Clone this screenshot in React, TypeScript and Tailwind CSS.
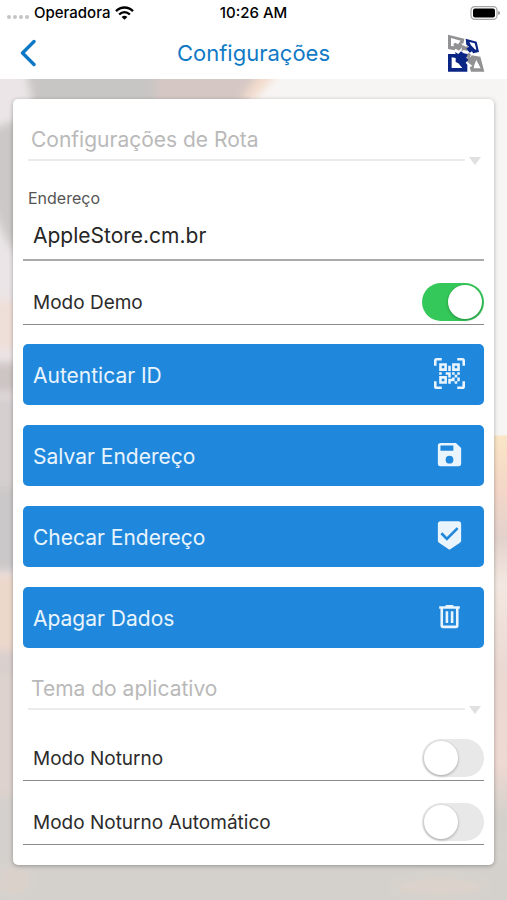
import { useState } from "react";

const ICONS = {
  qr: "M4,4H10V10H4V4M20,4V10H14V4H20M14,15H16V13H14V11H16V13H18V11H20V13H18V15H20V18H18V20H16V18H13V20H11V16H14V15M16,15V18H18V15H16M4,20V14H10V20H4M6,6V8H8V6H6M16,6V8H18V6H16M6,16V18H8V16H6M4,11H6V13H4V11M9,11H13V15H11V13H9V11M11,6H13V10H11V6M2,2V6H0V2A2,2 0 0,1 2,0H6V2H2M22,0A2,2 0 0,1 24,2V6H22V2H18V0H22M2,18V22H6V24H2A2,2 0 0,1 0,22V18H2M22,22V18H24V22A2,2 0 0,1 22,24H18V22H22Z",
  save: "M15,9H5V5H15M12,19A3,3 0 0,1 9,16A3,3 0 0,1 12,13A3,3 0 0,1 15,16A3,3 0 0,1 12,19M17,3H5C3.89,3 3,3.9 3,5V19A2,2 0 0,0 5,21H19A2,2 0 0,0 21,19V7L17,3Z",
  check: "M10,16L5,11L6.41,9.58L10,13.17L17.59,5.58L19,7M19,1H5C3.89,1 3,1.89 3,3V15.93C3,16.62 3.35,17.23 3.88,17.59L12,23L20.11,17.59C20.64,17.23 21,16.62 21,15.93V3C21,1.89 20.1,1 19,1Z",
  trash: "M9,3V4H4V6H5V19A2,2 0 0,0 7,21H17A2,2 0 0,0 19,19V6H20V4H15V3H9M7,6H17V19H7V6M9,8V17H11V8H9M13,8V17H15V8H13Z",
};

function Backdrop() {
  return (
    <svg
      className="absolute inset-0 -z-10 h-full w-full"
      viewBox="0 0 507 900"
      preserveAspectRatio="none"
      aria-hidden="true"
    >
      <defs>
        <filter id="soft" x="-20%" y="-20%" width="140%" height="140%">
          <feGaussianBlur stdDeviation="4" />
        </filter>
        <linearGradient id="right" x1="0" y1="0" x2="0" y2="1">
          <stop offset="0" stopColor="#fae6c6" />
          <stop offset="0.12" stopColor="#f3d6c8" />
          <stop offset="0.22" stopColor="#e3d2cc" />
          <stop offset="0.32" stopColor="#f3e8e1" />
          <stop offset="0.5" stopColor="#ead9d2" />
          <stop offset="0.7" stopColor="#efdad2" />
          <stop offset="0.82" stopColor="#d3d0cb" />
          <stop offset="1" stopColor="#d8d3ce" />
        </linearGradient>
      </defs>
      <rect width="507" height="900" fill="#ebe5e7" />
      <rect x="250" width="257" height="436" fill="#f7f5f4" />
      <rect x="250" y="435" width="257" height="465" fill="url(#right)" />
      <g filter="url(#soft)">
        <path d="M24 60H160V140H40Z" fill="#c8c6c4" />
        <path d="M156 60H282Q262 90 240 110H156Z" fill="#d5c8c4" />
        <path d="M262 70H280L254 100H240Z" fill="#f3dccd" />
        <path d="M-10 130L30 114V262Q2 250 -10 190Z" fill="#cbc8c7" />
        <rect x="-10" y="300" width="40" height="50" fill="#efdfd9" />
        <rect x="-10" y="362" width="40" height="30" fill="#cdc5c4" />
        <rect x="-10" y="396" width="40" height="90" fill="#d6cfd0" />
        <rect x="-10" y="486" width="40" height="84" fill="#cac8c8" />
        <rect x="-10" y="574" width="40" height="76" fill="#ecd7cb" />
        <rect x="-10" y="650" width="40" height="26" fill="#d9cfcd" />
        <rect x="-10" y="676" width="40" height="124" fill="#ddd2cd" />
        <rect x="-10" y="796" width="40" height="64" fill="#d4d0cd" />
        <rect x="-10" y="858" width="540" height="60" fill="#d4d1cd" />
        <ellipse cx="14" cy="880" rx="16" ry="14" fill="#dbd1cb" />
        <ellipse cx="440" cy="886" rx="46" ry="9" fill="#dbd2cb" />
      </g>
    </svg>
  );
}

function Logo() {
  return (
    <svg className="-ml-1 h-[46px] w-12" viewBox="0 0 144 138" role="img" aria-label="Logo">
      <g fill="#929294" fillRule="evenodd">
        <path d="M15 14L64 26L61 41L55 40L60 48L48 62L38 56L34 61L15 57ZM24 24V48L33 49L31 42L37 38L45 43L53 32Z" />
        <path d="M76 80L82 82L86 76L112 80L124 125H84L80 112L88 108L74 96L68 88ZM100 90L94 104L92 115H113Z" />
        <path d="M56 50L62 46L68 50L74 48L78 56L72 62L62 60L56 64Z" />
        <path d="M70 74L78 68L84 74L80 82L70 82Z" />
      </g>
      <g fill="#0b2585" fillRule="evenodd">
        <path d="M68 26L101 35L108 66L90 70L87 64L80 68L70 56L78 50L70 44ZM79 36L84 46L97 59L100 58L95 40Z" />
        <path d="M15 72H38L36 66L46 72L54 64L62 70L74 72L70 84L76 90L68 98L73 104V125H15ZM26 82V114H58L46 100L38 96V84Z" />
      </g>
    </svg>
  );
}

function StatusBar() {
  return (
    <div className="grid h-[26px] grid-cols-3 items-center px-[7px] text-[15px] font-medium text-black">
      <div className="flex items-center gap-[5px]">
        <span className="flex gap-[2px] pt-2" aria-hidden="true">
          {[0, 1, 2, 3].map((n) => (
            <i key={n} className="size-[4px] rounded-full bg-[#c4c4c4]" />
          ))}
        </span>
        <span>Operadora</span>
        <svg className="h-[14px] w-[19px]" viewBox="0 0 19 14" aria-label="Wi-Fi" role="img">
          <g fill="none" stroke="#000" strokeWidth="2.4">
            <path d="M1 5.2C6 .3 13 .3 18 5.2" />
            <path d="M4.1 8.5C7.4 5.4 11.6 5.4 14.9 8.5" />
          </g>
          <path d="M6.6 10.9Q9.5 8.4 12.4 10.9L9.5 13.8Z" />
        </svg>
      </div>
      <div className="text-center">10:26 AM</div>
      <svg className="h-[14px] w-[30px] justify-self-end" viewBox="0 0 30 14" aria-label="Bateria" role="img">
        <rect x="1" y=".7" width="26" height="12.6" rx="3.6" fill="none" stroke="#a5a5a5" strokeWidth="1.2" />
        <rect x="3" y="2.6" width="22" height="8.8" rx="2" />
        <path d="M28.2 5V9Q30 8.6 30 7T28.2 5Z" fill="#8c8c8c" />
      </svg>
    </div>
  );
}

function SectionSelect({ title }: { title: string }) {
  return (
    <label className="flex h-[62px] items-end pr-[3px] pl-[5px]">
      <select
        aria-label={title}
        className="h-[62px] min-w-0 flex-1 appearance-none border-b-2 border-[#ebebeb] bg-transparent pt-[22px] pl-[3px] text-[21px] text-[#b9b9b9] outline-none"
      >
        <option>{title}</option>
      </select>
      <svg className="-mb-1 ml-1 h-2 w-3 shrink-0" viewBox="0 0 12 8" aria-hidden="true">
        <path d="M0 0H12L6 8Z" fill="#e0e0e0" />
      </svg>
    </label>
  );
}

function SwitchRow({ label, initial = false }: { label: string; initial?: boolean }) {
  const [on, setOn] = useState(initial);
  return (
    <label className="flex h-16 items-end border-b border-[#8a8a8a] pb-[3px] pl-[10px]">
      <span className="flex h-[38px] flex-1 items-center pt-[2px] text-[19px] text-[#2c2c2c]">{label}</span>
      <input
        type="checkbox"
        role="switch"
        checked={on}
        onChange={(e) => setOn(e.target.checked)}
        className="h-[38px] w-[62px] appearance-none rounded-full bg-[#e8e8e8] p-[2px] before:block before:size-[34px] before:rounded-full before:bg-white before:shadow-[0_1px_3px_rgba(0,0,0,0.3)] checked:bg-[#34c759] checked:before:ml-6"
      />
    </label>
  );
}

function ActionButton({ label, icon }: { label: string; icon: keyof typeof ICONS }) {
  return (
    <button
      type="button"
      className="flex h-[61px] items-center justify-between rounded-[5px] bg-[#2088dc] pr-[19px] pl-[10px] text-[21px] text-[#e9f4fd]"
    >
      <span className="pt-[2px]">{label}</span>
      <svg className="mb-[3px] size-[31px]" viewBox="0 0 24 24" fill="currentColor" aria-hidden="true">
        <path d={ICONS[icon]} />
      </svg>
    </button>
  );
}

export default function App() {
  const [address, setAddress] = useState("AppleStore.cm.br");
  return (
    <div className="relative isolate min-h-screen pb-9 font-['Inter','Liberation_Sans',sans-serif]">
      <Backdrop />
      <header className="bg-white">
        <StatusBar />
        <nav className="grid h-[53px] grid-cols-[60px_1fr_60px] items-center">
          <button type="button" aria-label="Voltar" className="flex pl-5">
            <svg className="h-7 w-4" viewBox="0 0 16 28" fill="none" stroke="#0d78c4" strokeWidth="3.4">
              <path d="M14 2.5L2.5 14L14 25.5" strokeLinecap="round" strokeLinejoin="round" />
            </svg>
          </button>
          <h1 className="pt-[2px] text-center text-[22px] text-[#117ac6]">Configurações</h1>
          <Logo />
        </nav>
      </header>

      <main className="mx-[13px] mt-5 flex flex-col rounded-[5px] bg-white px-[10px] pb-5 shadow-[0_1px_4px_rgba(0,0,0,0.3)]">
        <SectionSelect title="Configurações de Rota" />

        <label htmlFor="endereco" className="mt-[26px] pl-[5px] text-[16px] leading-[22px] text-[#555]">
          Endereço
        </label>
        <input
          id="endereco"
          type="text"
          value={address}
          onChange={(e) => setAddress(e.target.value)}
          className="h-[52px] w-full border-b-2 border-[#ababab] bg-transparent pt-[2px] pl-[10px] text-[21px] text-[#262626] outline-none"
        />
        <SwitchRow label="Modo Demo" initial />

        <div className="mt-[19px] flex flex-col gap-5">
          <ActionButton label="Autenticar ID" icon="qr" />
          <ActionButton label="Salvar Endereço" icon="save" />
          <ActionButton label="Checar Endereço" icon="check" />
          <ActionButton label="Apagar Dados" icon="trash" />
        </div>

        <SectionSelect title="Tema do aplicativo" />
        <div className="mt-[7px]">
          <SwitchRow label="Modo Noturno" />
          <SwitchRow label="Modo Noturno Automático" />
        </div>
      </main>
    </div>
  );
}
